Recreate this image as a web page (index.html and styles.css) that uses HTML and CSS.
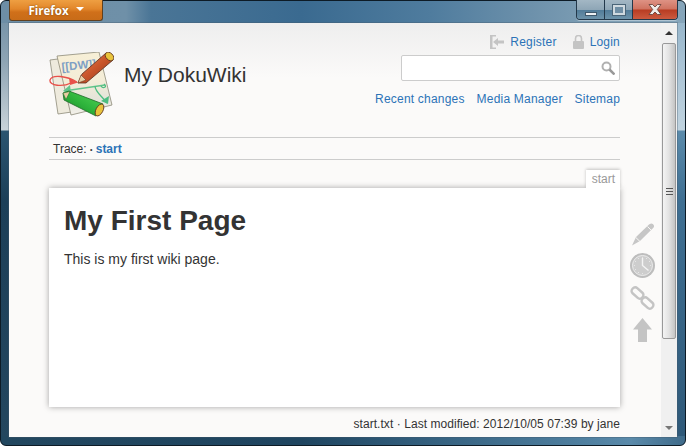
FILE: index.html
```html
<!DOCTYPE html>
<html lang="en">
<head>
<meta charset="utf-8">
<title>My DokuWiki</title>
<link rel="stylesheet" href="styles.css">
</head>
<body>
<div class="window">
  <div class="titlebar">
    <div class="ff-button">Firefox <span class="ff-arrow"></span></div>
    <div class="win-controls">
      <div class="win-btn win-min"><span class="min-glyph"></span></div>
      <div class="win-btn win-max"><span class="max-glyph"></span></div>
      <div class="win-btn win-close">
        <svg width="14" height="11" viewBox="0 0 14 11"><path d="M1 .5h3.500L7 3l2.500-2.500H13L9.300 5.500 13 10.500H9.500L7 8l-2.500 2.500H1L4.700 5.500z" fill="#f1ece9" stroke="#5e3a32" stroke-width=".8"/></svg>
      </div>
    </div>
  </div>
  <div class="client">
    <div class="page">
      <header class="site-head">
        <div class="brand">
          <svg class="logo" width="65" height="65" viewBox="0 0 65 65">
            <defs>
              <linearGradient id="sheet" x1="0" y1="0" x2="0" y2="1"><stop offset="0" stop-color="#f7efd6"/><stop offset=".45" stop-color="#f4edd8"/><stop offset=".75" stop-color="#e4e4da"/><stop offset="1" stop-color="#f3f1ea"/></linearGradient>
              <linearGradient id="red" x1="0" y1="0" x2="1" y2="1"><stop offset="0" stop-color="#e8875a"/><stop offset=".5" stop-color="#c9552a"/><stop offset="1" stop-color="#8f3416"/></linearGradient>
              <linearGradient id="green" x1="1" y1="0" x2="0" y2="1"><stop offset="0" stop-color="#57d65a"/><stop offset=".5" stop-color="#2fb53c"/><stop offset="1" stop-color="#158026"/></linearGradient>
            </defs>
            <path d="M1 8L40 3L50 56L9 62Z" fill="#eeeadd" stroke="#8d8a78" stroke-width=".8"/>
            <path d="M8 4L50 0L63 53L22 63Z" fill="url(#sheet)" stroke="#8d8a78" stroke-width=".8"/>
            <text x="13" y="19" class="logo-text" transform="rotate(-6 13 19)">[[DW]]</text>
            <path d="M28 30C18 24 3 22 1 28C0 34 14 35 22 31" fill="none" stroke="#e8504a" stroke-width="1.300"/>
            <path d="M29 30.500L20 26L21 33Z" fill="#e8504a"/>
            <path d="M15 39L56 33" fill="none" stroke="#62c48c" stroke-width="1.300"/>
            <path d="M46 34C46 40 53 44 58 51M55 32C59 35 54 37 52 34" fill="none" stroke="#4cbd80" stroke-width="1.300"/>
            <path d="M14 39L21 33L22 41Z" fill="#62c48c"/>
            <path d="M59 52L52 49L60 44Z" fill="#4cbd80"/>
            <path d="M29 31L33 22L57 1L64 8L37 31Z" fill="url(#red)" stroke="#5a2f1e" stroke-width=".8"/>
            <path d="M29 31L32 23L37 28Z" fill="#e9cda2" stroke="#5a2f1e" stroke-width=".5"/>
            <ellipse cx="60.500" cy="4.500" rx="3.500" ry="5" transform="rotate(-45 60.500 4.500)" fill="#e8c33c" stroke="#5a2f1e" stroke-width=".8"/>
            <path d="M14 41L20 39L54 52L47 64L15 48Z" fill="url(#green)" stroke="#1c6a26" stroke-width=".8"/>
            <path d="M14 41L21 39.500L17 47.500Z" fill="#e9cda2" stroke="#1c6a26" stroke-width=".5"/>
            <ellipse cx="50.500" cy="58" rx="3.500" ry="6.500" transform="rotate(28 50.500 58)" fill="#e8c33c" stroke="#5a2f1e" stroke-width=".8"/>
          </svg>
          <h1 class="site-title">My DokuWiki</h1>
        </div>
        <div class="tools">
          <nav class="user-tools">
            <a class="link with-icon">
              <svg width="14" height="14" viewBox="0 0 14 14"><path d="M0 0h6v1.500H2.500v11H6V14H0z" fill="#c4c4c4"/><path d="M3 7L8 3v2.500h6v3H8V11z" fill="#c4c4c4"/></svg>
              Register
            </a>
            <a class="link with-icon">
              <svg width="11" height="14" viewBox="0 0 11 14"><path d="M2.500 6.500V3.500a3 3 0 0 1 6 0v3" fill="none" stroke="#c4c4c4" stroke-width="1.600"/><rect x="0" y="6" width="11" height="8" rx="1" fill="#c4c4c4"/></svg>
              Login
            </a>
          </nav>
          <div class="search">
            <svg width="14" height="14" viewBox="0 0 14 14"><circle cx="5.500" cy="5.500" r="4" fill="none" stroke="#b0b0b0" stroke-width="2"/><path d="M8.500 8.500l5 5" stroke="#999" stroke-width="2.500"/></svg>
          </div>
          <nav class="site-tools">
            <a class="link">Recent changes</a>
            <a class="link">Media Manager</a>
            <a class="link">Sitemap</a>
          </nav>
        </div>
      </header>
      <div class="trace">Trace: <span class="bullet">•</span> <a class="trace-link">start</a></div>
      <div class="main">
        <div class="article-col">
          <div class="tab-row"><span class="tab">start</span></div>
          <article class="article">
            <h2 class="heading">My First Page</h2>
            <p class="para">This is my first wiki page.</p>
          </article>
          <div class="doc-info">start.txt · Last modified: 2012/10/05 07:39 by jane</div>
        </div>
        <aside class="page-tools">
          <svg width="24" height="24" viewBox="0 0 24 24"><path d="M1 23.500L5 15 18 2.500l.8-.5c1-.8 2.200-.8 3 0l.7.7c.8.8.8 2-.1 3L9 19z" fill="#c6c6c6"/><path d="M4.800 15.500L9 19.500" stroke="#f8f7f6" stroke-width="1"/><path d="M16.500 4.500l3.500 3.500" stroke="#f8f7f6" stroke-width="1"/></svg>
          <svg width="25" height="25" viewBox="0 0 25 25"><circle cx="12.500" cy="12.500" r="12.500" fill="#bdbdbd"/><circle cx="12.500" cy="12.500" r="10" fill="#cdcdcd" stroke="#ececec" stroke-width="1"/><path d="M12.500 5v7.500l6 5" fill="none" stroke="#f4f4f4" stroke-width="1.400"/><path d="M12.500 3.800v1M12.500 20.200v1M3.800 12.500h1M20.200 12.500h1M8.200 5l.5.9M16.800 5l-.5.9M5 8.200l.9.500M5 16.800l.9-.5M8.200 20l.5-.9M20 8.200l-.9.500" stroke="#f4f4f4" stroke-width=".8"/></svg>
          <svg width="25" height="26" viewBox="0 0 25 26"><g fill="none" stroke="#c4c4c4" stroke-width="2.400"><rect x="1" y="4.500" width="13" height="7" rx="3" transform="rotate(42 7.500 8)"/><rect x="11" y="14.500" width="13" height="7" rx="3" transform="rotate(42 17.500 18)"/></g></svg>
          <svg width="19" height="24" viewBox="0 0 19 24"><path d="M9.500 0L19 11.500H14V24H5V11.500H0z" fill="#c4c4c4"/></svg>
        </aside>
      </div>
    </div>
    <div class="scrollbar">
      <div class="sb-arrow sb-up"></div>
      <div class="sb-thumb"><span class="grip"></span></div>
      <div class="sb-arrow sb-down"></div>
    </div>
  </div>
</div>
</body>
</html>
```
FILE: styles.css
```css
* { box-sizing: border-box; }
html, body { margin: 0; height: 100%; }
body { overflow: hidden; font-family: "Liberation Sans", Arial, sans-serif; background: #fff; }
.window {
  width: 686px; height: 446px; display: flex; flex-direction: column;
  padding: 0 8px 8px 8px; border: 1px solid #0d1b26; border-radius: 6px;
  background-repeat: no-repeat;
  background-image:
    linear-gradient(90deg, #6d8ea6 0, #6f90a8 125px, #4a7596 150px, #3a6a90 300px, #4f7c9e 430px, #6d91ab 530px, #7f9fb5 600px, #86a5ba 100%),
    linear-gradient(90deg, #22475f 0, #1f4560 300px, #2f5a78 400px, #4f7f9f 580px, #5a8aaa 630px, #3f6b8a 100%),
    linear-gradient(180deg, #6c8ca3 0, #8ea4b4 60px, #c8d2d8 129px, #2a5470 130px, #1c3f58 200px, #24475f 100%),
    linear-gradient(180deg, #8fb0c6 0, #a8c2d4 60px, #c0d3df 129px, #5b8bab 130px, #3f6f92 200px, #2e5878 100%);
  background-size: 100% 22px, 100% 9px, 8px 100%, 8px 100%;
  background-position: 0 0, 0 100%, 0 0, 100% 0;
}
.titlebar { height: 22px; flex: none; position: relative; margin: 0 -8px; display: flex; justify-content: flex-end; padding-right: 7px; }
.ff-button {
  position: absolute; left: 8px; top: -1px; width: 94px; height: 21px;
  background: linear-gradient(180deg, #ee9f42 0, #e2862a 45%, #d0701a 60%, #c86c18 100%);
  border: 1px solid #5f4020; border-top: 0; border-radius: 0 0 3px 3px;
  color: #fff; font: bold 11.5px "Open Sans", "Liberation Sans", sans-serif;
  display: flex; align-items: center; justify-content: center; gap: 7px;
  text-shadow: 0 0 2px #7a4408;
}
.ff-arrow { width: 0; height: 0; border: 4px solid transparent; border-top: 4px solid #fff; border-bottom: 0; margin-top: -3px; }
.win-controls { display: flex; width: 102px; height: 20px; margin-top: -1px; border: 1px solid #23384a; border-top: 0; border-radius: 0 0 4px 4px; overflow: hidden; box-shadow: 0 1px 0 rgba(255,255,255,.35); }
.win-btn { display: flex; align-items: center; justify-content: center; height: 100%; background: linear-gradient(180deg, #a3b7c4 0, #8ea6b6 50%, #527c99 55%, #6d93aa 100%); border-right: 1px solid #23384a; }
.win-min { width: 28px; }
.win-max { width: 28px; }
.win-close { width: 44px; border-right: 0; background: linear-gradient(180deg, #de9284 0, #cf7260 48%, #b83c22 52%, #cc5a3f 100%); }
.min-glyph { width: 12px; height: 4px; margin-top: 8px; background: #eef1f3; border: 1px solid #3f586b; }
.max-glyph { width: 12px; height: 10px; border: 2px solid #cfd9df; outline: 1px solid #4a6578; background: #6f8ea4; }
.client { flex: 1; display: flex; min-height: 0; background: linear-gradient(180deg, #eeeeee 0, #fbfaf9 55px, #fbfaf9 100%); box-shadow: 0 0 0 1px rgba(70,90,105,.35); }
.page { flex: 1; min-width: 0; padding: 0 41px 0 40px; display: flex; flex-direction: column; }
.site-head { height: 114px; flex: none; display: flex; justify-content: space-between; }
.brand { display: flex; align-items: center; align-self: flex-start; padding-top: 29px; }
.logo { flex: none; margin-right: 10px; }
.logo-text { font: bold 11.500px "Liberation Sans", sans-serif; fill: #7d9fc4; }
.site-title { margin: 0 0 20px; font-weight: normal; font-size: 21px; color: #333; }
.tools { flex: none; width: 260px; display: flex; flex-direction: column; align-items: flex-end; padding-top: 10px; }
.user-tools { display: flex; gap: 16px; height: 18px; align-items: center; }
.with-icon { display: flex; align-items: center; gap: 6px; letter-spacing: .3px; }
.link { color: #2b73b7; font-size: 12px; letter-spacing: .2px; white-space: nowrap; }
.search { margin-top: 4px; width: 219px; height: 26px; background: #fff; border: 1px solid #ccc; border-radius: 2px; display: flex; align-items: center; justify-content: flex-end; padding-right: 4px; }
.site-tools { display: flex; gap: 12px; margin-top: 11px; }
.trace { flex: none; height: 23px; border-top: 1px solid #ccc; border-bottom: 1px solid #ccc; font-size: 12px; color: #333; padding: 4px 4px 0; white-space: nowrap; width: 571px; }
.bullet { font-size: 7px; vertical-align: 1px; }
.trace-link { color: #2b73b7; font-weight: bold; }
.main { flex: 1; display: flex; min-height: 0; width: 612px; margin-right: -41px; }
.article-col { width: 571px; flex: none; }
.tab-row { height: 28px; display: flex; justify-content: flex-end; align-items: flex-end; position: relative; z-index: 1; }
.tab { background: #fff; height: 18px; padding: 2px 5px 0 6px; font-size: 12px; color: #999; box-shadow: 0 -1px 3px rgba(0,0,0,.22); clip-path: inset(-4px -4px 0 -4px); }
.article { height: 219px; background: #fff; box-shadow: 0 0 6px rgba(0,0,0,.35); padding: 17px 15px; }
.heading { margin: 0 0 14px; font-size: 28px; line-height: 32px; color: #333; }
.para { margin: 0; font-size: 14px; line-height: 17px; color: #333; }
.doc-info { text-align: right; font-size: 12px; color: #333; margin-top: 10px; letter-spacing: .06px; }
.page-tools { flex: 1; display: flex; flex-direction: column; align-items: center; gap: 7px; padding: 62px 0 0 4px; }
.scrollbar { width: 16px; flex: none; display: flex; flex-direction: column; background: #f0f0f0; }
.sb-arrow { flex: none; display: flex; align-items: center; justify-content: center; }
.sb-arrow::after { content: ""; border: 4px solid transparent; }
.sb-up { height: 20px; }
.sb-down { height: 18px; margin-top: auto; }
.sb-up::after { border-bottom: 4px solid #333; border-top: 0; }
.sb-down::after { border-top: 4px solid #777; border-bottom: 0; }
.sb-thumb { height: 296px; margin: 0 1px; flex: none; background: linear-gradient(90deg, #f4f4f4, #e2e2e2 50%, #c4c4c4); border: 1px solid #999; border-radius: 2px; display: flex; align-items: center; justify-content: center; }
.grip { width: 7px; height: 7px; border-top: 1px solid #555; border-bottom: 1px solid #555; background: linear-gradient(#555,#555) center/100% 1px no-repeat; }
```
